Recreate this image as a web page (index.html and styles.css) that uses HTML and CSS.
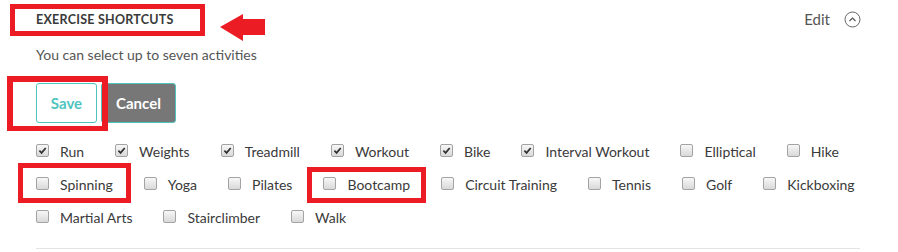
FILE: index.html
```html
<!DOCTYPE html>
<html>
<head>
<meta charset="utf-8">
<link rel="stylesheet" href="styles.css">
</head>
<body>
<div class="page">
  <header class="head">
    <h2 class="title">EXERCISE SHORTCUTS</h2>
    <div class="edit">
      <span class="edit-text">Edit</span>
      <svg class="toggle" width="17" height="17" viewBox="0 0 17 17"><circle cx="8.5" cy="8.5" r="7.5" fill="none" stroke="#666" stroke-width="1"/><path d="M5.5 10 L8.5 7 L11.5 10" fill="none" stroke="#555" stroke-width="1.2"/></svg>
    </div>
  </header>
  <p class="hint">You can select up to seven activities</p>
  <div class="actions">
    <button class="btn save">Save</button>
    <button class="btn cancel">Cancel</button>
  </div>
  <div class="options">
    <label class="opt"><span class="cb on"><svg viewBox="0 0 12 12"><path d="M2.6 6.2 L5 8.6 L9.5 3.2" fill="none" stroke="#333" stroke-width="1.9"/></svg></span>Run</label>
    <label class="opt"><span class="cb on"><svg viewBox="0 0 12 12"><path d="M2.6 6.2 L5 8.6 L9.5 3.2" fill="none" stroke="#333" stroke-width="1.9"/></svg></span>Weights</label>
    <label class="opt"><span class="cb on"><svg viewBox="0 0 12 12"><path d="M2.6 6.2 L5 8.6 L9.5 3.2" fill="none" stroke="#333" stroke-width="1.9"/></svg></span>Treadmill</label>
    <label class="opt"><span class="cb on"><svg viewBox="0 0 12 12"><path d="M2.6 6.2 L5 8.6 L9.5 3.2" fill="none" stroke="#333" stroke-width="1.9"/></svg></span>Workout</label>
    <label class="opt"><span class="cb on"><svg viewBox="0 0 12 12"><path d="M2.6 6.2 L5 8.6 L9.5 3.2" fill="none" stroke="#333" stroke-width="1.9"/></svg></span>Bike</label>
    <label class="opt"><span class="cb on"><svg viewBox="0 0 12 12"><path d="M2.6 6.2 L5 8.6 L9.5 3.2" fill="none" stroke="#333" stroke-width="1.9"/></svg></span>Interval Workout</label>
    <label class="opt"><span class="cb"></span>Elliptical</label>
    <label class="opt"><span class="cb"></span>Hike</label>
    <label class="opt"><span class="cb"></span>Spinning</label>
    <label class="opt"><span class="cb"></span>Yoga</label>
    <label class="opt"><span class="cb"></span>Pilates</label>
    <label class="opt"><span class="cb"></span>Bootcamp</label>
    <label class="opt"><span class="cb"></span>Circuit Training</label>
    <label class="opt"><span class="cb"></span>Tennis</label>
    <label class="opt"><span class="cb"></span>Golf</label>
    <label class="opt"><span class="cb"></span>Kickboxing</label>
    <label class="opt"><span class="cb"></span>Martial Arts</label>
    <label class="opt"><span class="cb"></span>Stairclimber</label>
    <label class="opt"><span class="cb"></span>Walk</label>
  </div>
  <hr class="sep">
</div>

<div class="mark mark-title"></div>
<svg class="arrow" width="46" height="30" viewBox="0 0 46 30"><polygon points="0,14 23,1 23,6 45,6 45,22 23,22 23,28" fill="#ec1c24"/></svg>
<div class="mark mark-save"></div>
<div class="mark mark-spinning"></div>
<div class="mark mark-bootcamp"></div>
</body>
</html>
```

FILE: styles.css
```css
html, body {
  margin: 0;
  padding: 0;
  background: #fff;
}
body {
  position: relative;
  width: 898px;
  height: 252px;
  overflow: hidden;
  font-family: "Lato", "Liberation Sans", sans-serif;
  color: #444;
}
.page {
  padding: 0 38px 0 36px;
}
.head {
  height: 38px;
  display: flex;
  align-items: center;
  justify-content: space-between;
}
.title {
  margin: 0;
  font-size: 12.5px;
  font-weight: 700;
  letter-spacing: 0.25px;
  color: #3a3a3a;
}
.edit {
  display: flex;
  align-items: center;
  gap: 14px;
  margin-right: -1px;
}
.edit-text {
  font-size: 15px;
  color: #555;
}
.toggle {
  display: block;
}
.hint {
  margin: 8px 0 0;
  line-height: 18px;
  font-size: 14px;
  color: #555;
}
.actions {
  display: flex;
  gap: 4px;
  margin-top: 19px;
}
.btn {
  height: 40px;
  border: 1px solid #4fc4bf;
  border-radius: 3px;
  font-family: "Lato", "Liberation Sans", sans-serif;
  font-size: 15px;
  font-weight: 700;
  padding: 0;
  cursor: pointer;
}
.save {
  width: 61px;
  background: #fff;
  color: #4fc4bf;
}
.cancel {
  width: 75px;
  background: #777;
  color: #fff;
}
.options {
  display: flex;
  flex-wrap: wrap;
  column-gap: 31px;
  margin-top: 12px;
  margin-right: -14px;
}
.opt {
  display: flex;
  align-items: center;
  height: 33px;
  font-size: 14px;
  color: #3a3a3a;
}
.cb {
  box-sizing: border-box;
  width: 13px;
  height: 13px;
  margin-right: 11px;
  margin-top: -3px;
  border: 1px solid #a3a3a3;
  border-radius: 2px;
  background: linear-gradient(#f7f7f7, #d9d9d9);
  display: flex;
  align-items: center;
  justify-content: center;
}
.cb svg {
  width: 11px;
  height: 11px;
}
.sep {
  margin: 14px 0 0;
  border: 0;
  border-top: 1px solid #e3e3e3;
  height: 0;
}
.mark {
  position: absolute;
  box-sizing: border-box;
  border: 5px solid #ec1c24;
}
.mark-title { left: 10px; top: 4px; width: 195px; height: 32px; }
.mark-save { left: 7px; top: 76px; width: 101px; height: 55px; border-width: 6px 6px 5px 6px; }
.mark-spinning { left: 18px; top: 163px; width: 113px; height: 40px; }
.mark-bootcamp { left: 307px; top: 167px; width: 119px; height: 36px; }
.arrow {
  position: absolute;
  left: 220px;
  top: 13px;
}
```
